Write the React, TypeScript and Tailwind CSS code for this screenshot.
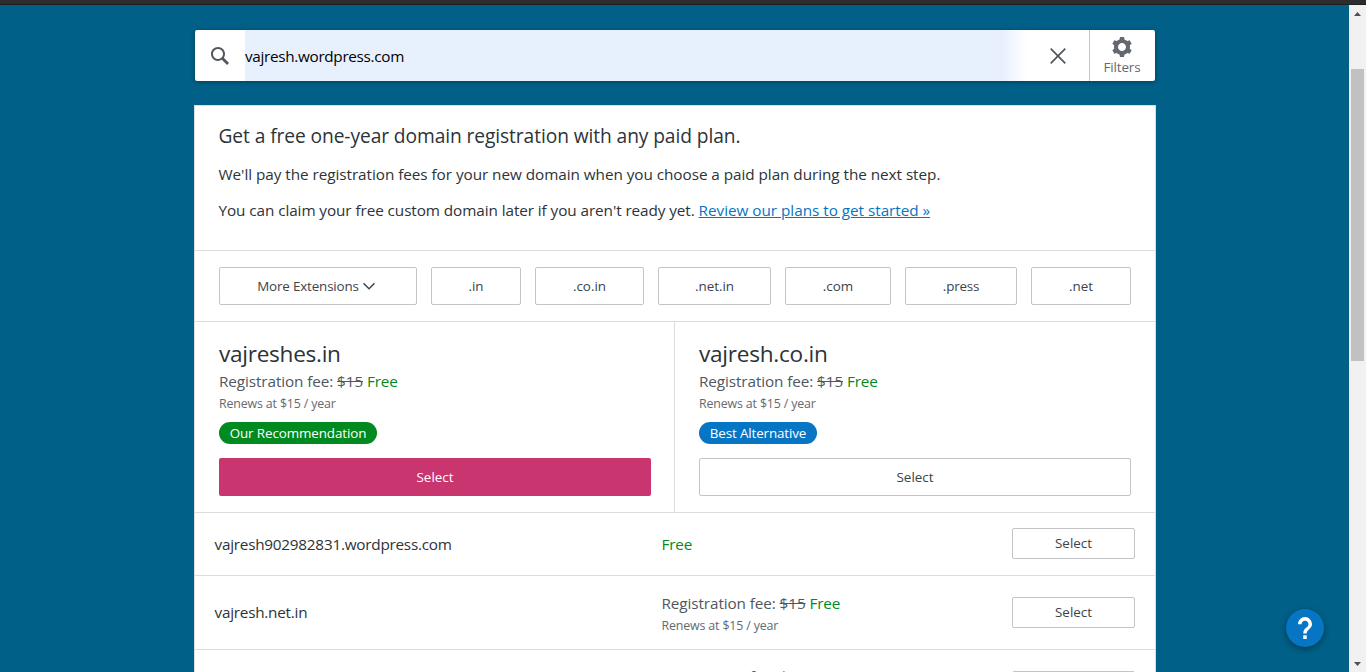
import React from "react";

function SearchIcon() {
  return (
    <svg width="24" height="24" viewBox="0 0 24 24" fill="#50575e">
      <path d="M21 19l-5.154-5.154C16.574 12.742 17 11.42 17 10c0-3.866-3.134-7-7-7s-7 3.134-7 7 3.134 7 7 7c1.42 0 2.742-.426 3.846-1.154L19 21l2-2zM5 10c0-2.757 2.243-5 5-5s5 2.243 5 5-2.243 5-5 5-5-2.243-5-5z" />
    </svg>
  );
}

function CogIcon() {
  return (
    <svg width="24" height="24" viewBox="0 0 24 24" fill="#646970">
      <path d="M20 12c0-.568-.06-1.122-.174-1.656l1.834-1.612-2-3.464-2.322.786a7.994 7.994 0 0 0-2.859-1.657L14 2h-4l-.48 2.397a7.972 7.972 0 0 0-2.858 1.657L4.34 5.268l-2 3.464 1.834 1.612C4.06 10.878 4 11.432 4 12s.06 1.122.174 1.656L2.34 15.268l2 3.464 2.322-.786a7.994 7.994 0 0 0 2.859 1.657L10 22h4l.48-2.397a7.972 7.972 0 0 0 2.858-1.657l2.322.786 2-3.464-1.834-1.612c.113-.534.174-1.088.174-1.656zm-8 4c-2.21 0-4-1.79-4-4s1.79-4 4-4 4 1.79 4 4-1.79 4-4 4z" />
    </svg>
  );
}

function SearchBar() {
  return (
    <div className="flex h-[51px] w-[960px] rounded-[2px] bg-white shadow-[0_1px_4px_rgba(0,0,0,0.35)]">
      <div className="flex w-[50px] items-center justify-center">
        <SearchIcon />
      </div>
      <div className="flex flex-1 items-center bg-linear-to-r from-[#e8f0fe] from-[757px] to-white to-[782px]">
        <span className="flex-1 pt-[2px] text-[15.3px] text-black">
          <span className="tracking-[-0.32px]">vajresh.wordpress.com</span>
        </span>
      </div>
      <button className="flex w-[62px] items-center justify-center" aria-label="Close">
        <svg width="18" height="18" viewBox="0 0 18 18" fill="none" stroke="#50575e" strokeWidth="1.7">
          <path d="M1.7 1.7L16.3 16.3M16.3 1.7L1.7 16.3" />
        </svg>
      </button>
      <button className="flex w-[66px] flex-col items-center border-l border-[#c3c4c7] pt-[5px] pr-px text-[#646970]">
        <CogIcon />
        <span className="text-[13.4px] leading-[17px] tracking-[-0.15px]">Filters</span>
      </button>
    </div>
  );
}

const boxButton =
  "flex items-center justify-center rounded-[2px] border border-[#c3c4c7] bg-white text-[13.4px] text-[#3c434a]";

function Price() {
  return (
    <>
      <div className="h-[22px] text-[15.3px] leading-[22px] tracking-[-0.1px] text-[#50575e]">
        Registration fee: <span className="line-through">$15</span> <span className="text-[#008a20]">Free</span>
      </div>
      <div className="h-[22px] text-[12.4px] leading-[23px] tracking-[-0.15px] text-[#646970]">Renews at $15 / year</div>
    </>
  );
}

function Promo() {
  return (
    <div className="h-[145px] border-b border-[#dcdcde] pr-6 pl-[23.5px] text-[#2c3338]">
      <h2 className="pt-[15px] text-[19.2px] leading-[30px]">
        <span className="tracking-[-0.09px]">Get a free one-year domain registration with any paid plan.</span>
      </h2>
      <p className="pt-[11px] text-[15.3px] leading-[24px] tracking-[-0.05px]">
        We'll pay the registration fees for your new domain when you choose a paid plan during the next step.
      </p>
      <p className="pt-[12px] text-[15.3px] leading-[24px] tracking-[-0.08px]">
        You can claim your free custom domain later if you aren't ready yet.{" "}
        <a className="tracking-[-0.03px] text-[#0675c4] underline">Review our plans to get started »</a>
      </p>
    </div>
  );
}

function Extensions() {
  return (
    <div className="flex h-[71px] gap-[14px] border-b border-[#dcdcde] px-6 py-4">
      <button className={`${boxButton} w-[198px] gap-[1px] pr-px tracking-[-0.16px]`}>
        More Extensions
        <svg width="18" height="18" viewBox="0 0 24 24" fill="#3c434a">
          <path d="M20 9l-8 8-8-8 1.414-1.414L12 14.172l6.586-6.586z" />
        </svg>
      </button>
      <button className={`${boxButton} w-[90px]`}>.in</button>
      <button className={`${boxButton} w-[109px]`}>.co.in</button>
      <button className={`${boxButton} w-[113px]`}>.net.in</button>
      <button className={`${boxButton} w-[106px]`}>.com</button>
      <button className={`${boxButton} w-[112px] tracking-[-0.2px]`}>.press</button>
      <button className={`${boxButton} w-[100px]`}>.net</button>
    </div>
  );
}

function Featured() {
  return (
    <div className="flex h-[191px] border-b border-[#dcdcde]">
      <div className="w-[480px] border-r border-[#dcdcde] pr-[23px] pl-6">
        <h3 className="h-[48px] pt-[16px] text-[22.6px] leading-[32px] text-[#2c3338]">
          <span className="tracking-[-0.28px]">vajreshes.in</span>
        </h3>
        <Price />
        <div className="mt-[8px] flex h-[22px] w-[158px] items-center justify-center rounded-full bg-[#008a20] text-[13.4px] font-medium tracking-[-0.1px] text-white">
          Our Recommendation
        </div>
        <button className="mt-[14px] flex h-[38px] w-full items-center justify-center rounded-[2px] bg-[#c9356e] text-[13.4px] text-white">
          Select
        </button>
      </div>
      <div className="w-[480px] px-6">
        <h3 className="h-[48px] pt-[16px] text-[22.6px] leading-[32px] text-[#2c3338]">
          <span className="tracking-[-0.25px]">vajresh.co.in</span>
        </h3>
        <Price />
        <div className="mt-[8px] flex h-[22px] w-[118px] items-center justify-center rounded-full bg-[#0675c4] text-[13.4px] font-medium tracking-[-0.12px] text-white">
          Best Alternative
        </div>
        <button className={`${boxButton} mt-[14px] h-[38px] w-full`}>Select</button>
      </div>
    </div>
  );
}

interface RowProps {
  name: string;
  className: string;
  buttonClassName?: string;
  children: React.ReactNode;
}

function Row({ name, className, buttonClassName = "", children }: RowProps) {
  return (
    <div className={`flex items-center border-b border-[#dcdcde] pr-5 pl-[19.5px] ${className}`}>
      <div className="w-[447px] text-[15.3px] text-[#2c3338]">
        <span className="tracking-[-0.24px]">{name}</span>
      </div>
      <div className="flex-1">{children}</div>
      <button className={`${boxButton} h-[31px] w-[123px] ${buttonClassName}`}>Select</button>
    </div>
  );
}

function Scrollbar() {
  return (
    <div className="flex w-[17px] flex-col items-center bg-[#f1f1f1]">
      <div className="flex h-[17px] items-center">
        <svg width="7" height="4" viewBox="0 0 7 4" fill="#505050">
          <path d="M3.5 0L7 4H0z" />
        </svg>
      </div>
      <div className="mt-[47px] h-[292px] w-[13px] bg-[#c1c1c1]" />
      <div className="mt-auto flex h-[17px] items-center">
        <svg width="7" height="4" viewBox="0 0 7 4" fill="#505050">
          <path d="M3.5 4L7 0H0z" />
        </svg>
      </div>
    </div>
  );
}

export default function App() {
  return (
    <div className="relative flex h-[672px] w-[1366px] flex-col overflow-hidden bg-[#016087] font-['Open_Sans','Noto_Sans',sans-serif]">
      <div className="h-[5px] shrink-0 border-b border-[#1f1f1f] bg-[#2d2d2d]" />
      <div className="flex h-[667px]">
        <main className="flex-1 overflow-hidden pt-[25px] pl-[195px]">
          <SearchBar />
          <div className="mt-[25px] w-[960px] bg-white shadow-[0_0_0_1px_#dcdcde]">
            <Promo />
            <Extensions />
            <Featured />
            <Row name="vajresh902982831.wordpress.com" className="h-[63px]" buttonClassName="mb-[2px] pt-px">
              <div className="text-[15.3px] tracking-[-0.2px] text-[#008a20]">Free</div>
            </Row>
            <Row name="vajresh.net.in" className="h-[74px]">
              <div className="pt-[2px]">
                <Price />
              </div>
            </Row>
            <Row name="vajresh.com" className="h-[74px]">
              <Price />
            </Row>
          </div>
        </main>
        <Scrollbar />
      </div>
      <button
        className="absolute top-[609px] left-[1286px] flex h-[38px] w-[38px] items-center justify-center rounded-full bg-[#0675c4] shadow-[0_2px_6px_rgba(0,0,0,0.4)]"
        aria-label="Help"
      >
        <svg width="14" height="22" viewBox="8 6 8 12" fill="#fff" preserveAspectRatio="none">
          <path d="M11 16h2v2h-2zM12 6c-2.2 0-4 1.8-4 4h2c0-1.1.9-2 2-2s2 .9 2 2c0 2-3 1.75-3 5h2c0-2.25 3-2.5 3-5 0-2.2-1.8-4-4-4" />
        </svg>
      </button>
    </div>
  );
}
